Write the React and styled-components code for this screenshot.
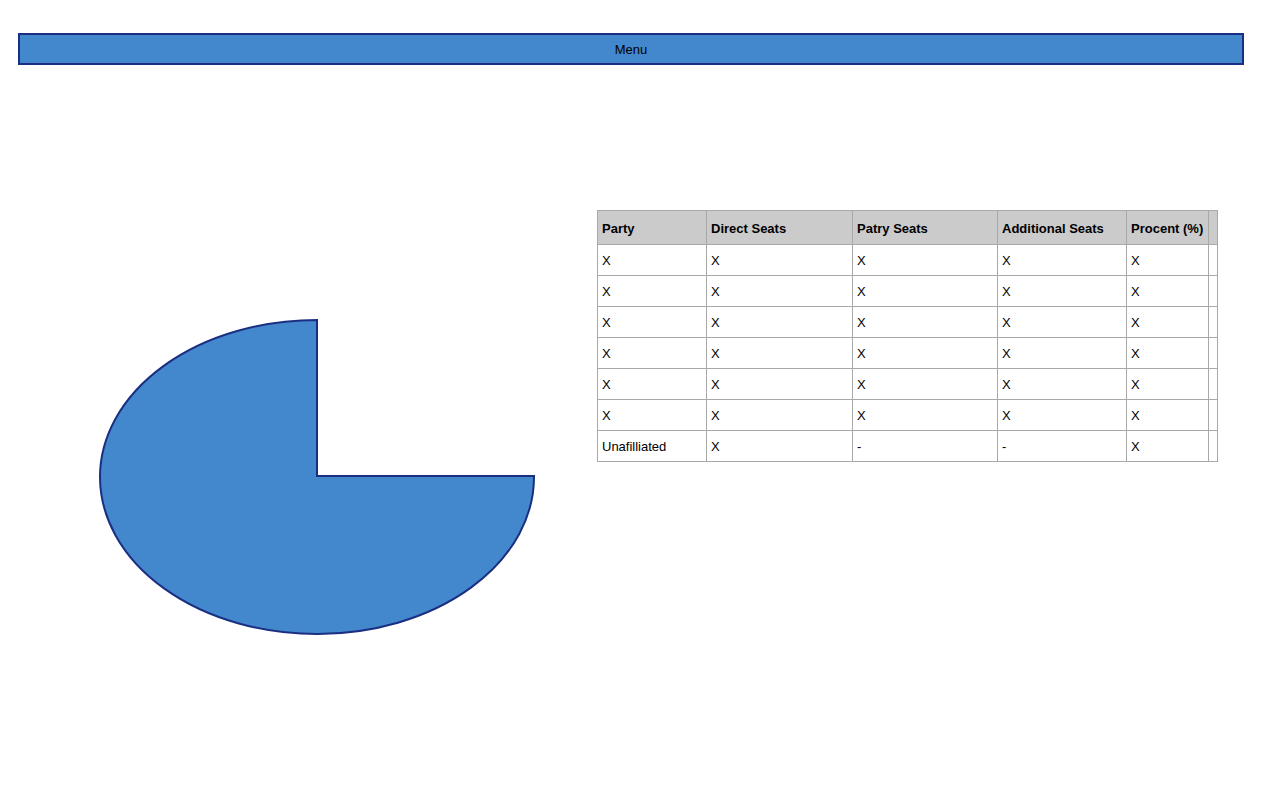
import React from 'react';
import styled, { createGlobalStyle } from 'styled-components';

const GlobalStyle = createGlobalStyle`
    html, body {
        margin: 0;
        padding: 0;
        background: #fff;
        font-family: "Liberation Sans", Arial, sans-serif;
    }
`;

const Page = styled.div`
    padding: 33px 36px 0 18px;
`;

const MenuBar = styled.div`
    height: 28px;
    background: #4388cc;
    border: 2px solid #1b2f82;
    display: flex;
    align-items: center;
    justify-content: center;
    font-size: 13px;
    color: #000;
`;

const Content = styled.section`
    display: flex;
    align-items: flex-start;
    margin-top: 145px;
`;

const ChartArea = styled.div`
    width: 579px;
    flex-shrink: 0;
    padding: 108px 0 0 81px;
    box-sizing: border-box;
`;

const Table = styled.table`
    border-collapse: collapse;
    table-layout: fixed;
    width: 620px;
    font-size: 13px;
    color: #000;
`;

const HeadCell = styled.th`
    height: 32px;
    padding: 1px 4px 0;
    background: #cbcbcb;
    border: 1px solid #a8a8a8;
    text-align: left;
    font-weight: bold;
    white-space: nowrap;
    overflow: hidden;
`;

const Cell = styled.td`
    height: 30px;
    padding: 0 4px;
    border: 1px solid #a8a8a8;
    text-align: left;
    white-space: nowrap;
`;

const columns = [
    { label: 'Party', width: 109 },
    { label: 'Direct Seats', width: 146 },
    { label: 'Patry Seats', width: 145 },
    { label: 'Additional Seats', width: 129 },
    { label: 'Procent (%)', width: 82 },
    { label: '', width: 9 },
];

const rows = [
    ['X', 'X', 'X', 'X', 'X', ''],
    ['X', 'X', 'X', 'X', 'X', ''],
    ['X', 'X', 'X', 'X', 'X', ''],
    ['X', 'X', 'X', 'X', 'X', ''],
    ['X', 'X', 'X', 'X', 'X', ''],
    ['X', 'X', 'X', 'X', 'X', ''],
    ['Unafilliated', 'X', '-', '-', 'X', ''],
];

const PieChart = () => (
    <svg width="438" height="318" viewBox="0 0 438 318">
        <path
            d="M218 2 L218 158 L435 158 A217 157 0 1 1 218 2 Z"
            fill="#4388cc"
            stroke="#1b2f82"
            strokeWidth="2"
            strokeLinejoin="miter"
        />
    </svg>
);

export default function App() {
    return (
        <Page>
            <GlobalStyle />
            <MenuBar>Menu</MenuBar>
            <Content>
                <ChartArea>
                    <PieChart />
                </ChartArea>
                <Table>
                    <colgroup>
                        {columns.map((c, i) => (
                            <col key={i} style={{ width: c.width }} />
                        ))}
                    </colgroup>
                    <thead>
                        <tr>
                            {columns.map((c, i) => (
                                <HeadCell key={i}>{c.label}</HeadCell>
                            ))}
                        </tr>
                    </thead>
                    <tbody>
                        {rows.map((r, i) => (
                            <tr key={i}>
                                {r.map((v, j) => (
                                    <Cell key={j}>{v}</Cell>
                                ))}
                            </tr>
                        ))}
                    </tbody>
                </Table>
            </Content>
        </Page>
    );
}
